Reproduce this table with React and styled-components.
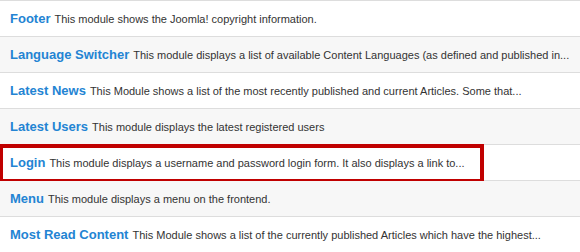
import React from "react"
import styled, { createGlobalStyle } from "styled-components"

const GlobalStyle = createGlobalStyle`
  body {
    margin: 0;
    background: #fff;
    font-family: "Liberation Sans", Arial, sans-serif;
  }
`

const List = styled.ul`
  list-style: none;
  margin: 0;
  padding: 0;
  border-top: 1px solid #dddddd;
`

const Row = styled.li`
  position: relative;
  height: 35px;
  display: flex;
  align-items: center;
  padding: 0 10px;
  border-bottom: 1px solid #dddddd;
  background: ${p => (p.$odd ? "#f7f7f7" : "#ffffff")};
  white-space: nowrap;
  overflow: visible;
`

const Title = styled.a`
  color: #2384d3;
  font-size: 13px;
  font-weight: bold;
  text-decoration: none;
  margin-right: 4px;
`

const Desc = styled.small`
  color: #333333;
  font-size: 11px;
`

const Highlight = styled.span`
  position: absolute;
  top: -1px;
  left: -1px;
  width: 485px;
  height: 39px;
  box-sizing: border-box;
  border: 4px solid #c00000;
  pointer-events: none;
`

const modules = [
  { title: "Footer", desc: "This module shows the Joomla! copyright information." },
  {
    title: "Language Switcher",
    desc: "This module displays a list of available Content Languages (as defined and published in..."
  },
  {
    title: "Latest News",
    desc: "This Module shows a list of the most recently published and current Articles. Some that..."
  },
  { title: "Latest Users", desc: "This module displays the latest registered users" },
  {
    title: "Login",
    desc: "This module displays a username and password login form. It also displays a link to...",
    marked: true
  },
  { title: "Menu", desc: "This module displays a menu on the frontend." },
  {
    title: "Most Read Content",
    desc: "This Module shows a list of the currently published Articles which have the highest..."
  }
]

export default function App() {
  return (
    <>
      <GlobalStyle />
      <List>
        {modules.map((m, i) => (
          <Row key={m.title} $odd={i % 2 === 1}>
            <Title href="#">{m.title}</Title>
            <Desc>{m.desc}</Desc>
            {m.marked && <Highlight />}
          </Row>
        ))}
      </List>
    </>
  )
}
